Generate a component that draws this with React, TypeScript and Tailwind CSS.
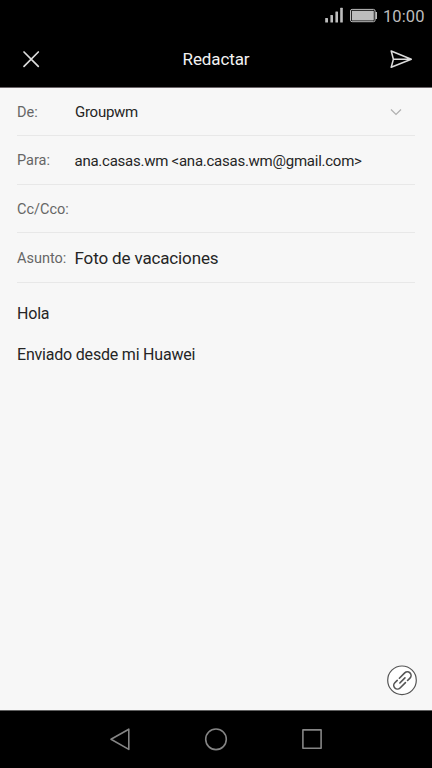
import React from "react";

function StatusBar() {
  return (
    <div className="flex h-[31px] items-center justify-end pr-[7px]">
      <svg className="mr-[7px] h-[31px] w-[18px]" viewBox="325 0 18 31" fill="#bdbdbd">
        <rect x="325.2" y="18" width="2.8" height="4.5" rx=".5" />
        <rect x="330.4" y="15" width="2.6" height="7.5" rx=".5" />
        <rect x="335.4" y="11.4" width="2.6" height="11.1" rx=".5" />
        <rect x="340.2" y="7.8" width="2.6" height="14.7" rx=".5" />
      </svg>
      <svg className="mr-[6px] h-[31px] w-[27px]" viewBox="350 0 27 31">
        <rect x="350.5" y="9.4" width="24.6" height="12.3" rx="1.6" fill="none" stroke="#bdbdbd" />
        <rect x="351.8" y="10.7" width="22" height="9.7" rx=".4" fill="#bdbdbd" />
        <path d="M375.4 12h1.6v7h-1.6z" fill="#bdbdbd" />
      </svg>
      <span className="w-[42px] whitespace-nowrap pt-px text-[16.5px] leading-[31px] tracking-[0.1px] text-[#bdbdbd]">10:00</span>
    </div>
  );
}

function Header() {
  return (
    <header className="grid h-[57px] grid-cols-[80px_1fr_80px] items-center border-b border-[#6b6468]">
      <svg className="ml-[20px] h-[22px] w-[22px]" viewBox="0 0 22 22" fill="none" stroke="#dcdcdc" strokeWidth="1.7" strokeLinecap="round">
        <path d="M4 4 18.3 18.3M18.3 4 4 18.3" />
      </svg>
      <h1 className="text-center text-[17px] leading-6 tracking-[-0.1px] text-[#f2f2f2]">Redactar</h1>
      <svg className="ml-[36px] h-[22px] w-[26px]" viewBox="388 48 26 22" fill="none" stroke="#dcdcdc" strokeWidth="1.5" strokeLinejoin="round">
        <path d="M391.2 51 411.3 59.3 391.2 67.2 393.4 59.3ZM393.4 59.3H411" />
      </svg>
    </header>
  );
}

function Field({ label, height, children }: { label: string; height: string; children?: React.ReactNode }) {
  return (
    <div className={`flex items-center border-b border-[#e8e8e8] pt-[2px] ${height}`}>
      <span className="w-[58px] shrink-0 whitespace-nowrap text-[14.5px] text-[#666666]">{label}</span>
      {children}
    </div>
  );
}

function NavBar() {
  return (
    <nav className="flex h-[58px] items-center justify-center border-t border-[#606060] bg-black">
      <svg className="h-[57px] w-[230px]" viewBox="101 711 230 57" fill="none" stroke="#858585" strokeWidth="1.6" strokeLinejoin="round">
        <path d="M128.8 729.2V749.4L111 739.3Z" />
        <circle cx="216" cy="739.3" r="10.3" />
        <rect x="302.9" y="729.9" width="18.2" height="18.4" />
      </svg>
    </nav>
  );
}

export default function App() {
  return (
    <div className="flex h-[768px] w-[432px] flex-col overflow-hidden bg-[#f7f7f7] font-[Roboto,sans-serif] text-[#252525]">
      <div className="bg-black">
        <StatusBar />
        <Header />
      </div>
      <main className="flex flex-1 flex-col px-[17px]">
        <Field label="De:" height="h-[48px]">
          <span className="text-[15px] tracking-[-0.27px]">Groupwm</span>
          <svg className="mr-[11px] mb-[2px] ml-auto h-[14px] w-[16px]" viewBox="388 105 16 14" fill="none" stroke="#b0b0b0" strokeWidth="1.2">
            <path d="m391 109.5 5 5 5-5" />
          </svg>
        </Field>
        <Field label="Para:" height="h-[49px]">
          <span className="-ml-[0.5px] whitespace-nowrap text-[15px] tracking-[-0.25px]">ana.casas.wm &lt;ana.casas.wm@gmail.com&gt;</span>
        </Field>
        <Field label="Cc/Cco:" height="h-[48px]" />
        <Field label="Asunto:" height="h-[50px]">
          <span className="-ml-[0.5px] text-[17px] tracking-[-0.14px]">Foto de vacaciones</span>
        </Field>
        <div className="pt-[20px] text-[16px] leading-[21px] tracking-[-0.2px]">
          <p className="mb-[20px]">Hola</p>
          <p>Enviado desde mi Huawei</p>
        </div>
        <svg className="mt-auto mr-[-3px] mb-[14px] h-[32px] w-[32px] self-end" viewBox="386 664 32 32" fill="none">
          <circle cx="402" cy="680.3" r="14.3" fill="#fff" stroke="#555" strokeWidth="1.2" />
          <g transform="translate(402.4 680.4) rotate(-45)" stroke="#555" strokeWidth="1.6" strokeLinecap="round">
            <path d="M-.6-3.7H7a3.7 3.7 0 0 1 0 7.4H3.6" />
            <path d="M.6 3.7H-7a3.7 3.7 0 0 1 0-7.4H-3.6" />
            <path d="M-3.6 0H3.6" />
          </g>
        </svg>
      </main>
      <NavBar />
    </div>
  );
}
